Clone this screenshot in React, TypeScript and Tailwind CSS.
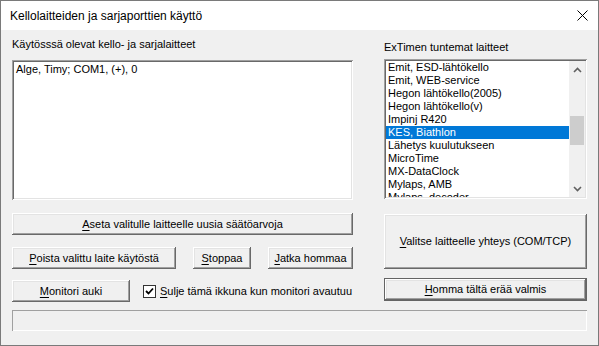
import React from "react";

const raised =
  "shadow-[inset_-1px_-1px_#696969,inset_1px_1px_#ffffff,inset_-2px_-2px_#a0a0a0,inset_2px_2px_#e3e3e3]";
const sunken =
  "shadow-[inset_1px_1px_#a0a0a0,inset_-1px_-1px_#ffffff,inset_2px_2px_#696969,inset_-2px_-2px_#e3e3e3]";

const devices = [
  "Emit, ESD-lähtökello",
  "Emit, WEB-service",
  "Hegon lähtökello(2005)",
  "Hegon lähtökello(v)",
  "Impinj R420",
  "KES, Biathlon",
  "Lähetys kuulutukseen",
  "MicroTime",
  "MX-DataClock",
  "Mylaps, AMB",
  "Mylaps, decoder",
];

function Btn({
  u,
  rest,
  className = "",
}: {
  u: string;
  rest: string;
  className?: string;
}) {
  return (
    <div
      className={`flex items-center justify-center bg-[#f0f0f0] text-[11px] leading-[13px] text-black ${raised} ${className}`}
    >
      <span>
        <span className="underline underline-offset-[2px]">{u}</span>
        {rest}
      </span>
    </div>
  );
}

function Chevron({ up }: { up: boolean }) {
  return (
    <svg width="9" height="6" viewBox="0 0 9 6">
      <polyline
        points={up ? "1,5 4.5,1.5 8,5" : "1,1 4.5,4.5 8,1"}
        fill="none"
        stroke="#606060"
        strokeWidth="1.6"
      />
    </svg>
  );
}

export default function App() {
  return (
    <div
      className="w-[599px] h-[346px] border border-[#7a7a7a] bg-[#f0f0f0] flex flex-col overflow-hidden"
      style={{ fontFamily: '"Liberation Sans", Arial, sans-serif' }}
    >
      {/* title bar */}
      <div className="h-[29px] bg-white flex items-center justify-between pl-[9px] pr-[10px] shrink-0">
        <span className="text-[12px] text-black">Kellolaitteiden ja sarjaporttien käyttö</span>
        <svg width="11" height="11" viewBox="0 0 11 11">
          <path d="M0.5 0.5 L10.5 10.5 M10.5 0.5 L0.5 10.5" stroke="#000" strokeWidth="1" />
        </svg>
      </div>

      <div className="flex flex-col px-[11px]">
        <div className="flex">
          {/* left column */}
          <div className="w-[341px] flex flex-col">
            <div className="mt-[8px] h-[13px] text-[11px] leading-[13px]">
              Käytösssä olevat kello- ja sarjalaitteet
            </div>
            <div className={`mt-[9px] h-[140px] bg-white p-[2px] ${sunken}`}>
              <div className="pl-[2px] pt-[1px] text-[11px] leading-[13px]">Alge, Timy; COM1, (+), 0</div>
            </div>
            <Btn className="mt-[13px] h-[22px]" u="A" rest="seta valitulle laitteelle uusia säätöarvoja" />
            <div className="mt-[12px] flex gap-[17px]">
              <Btn className="w-[164px] h-[22px]" u="P" rest="oista valittu laite käytöstä" />
              <Btn className="w-[58px] h-[22px]" u="S" rest="toppaa" />
              <Btn className="w-[85px] h-[22px]" u="J" rest="atka hommaa" />
            </div>
            <div className="mt-[11px] flex items-center">
              <Btn className="w-[118px] h-[22px]" u="M" rest="onitori auki" />
              <div className="ml-[13px] w-[13px] h-[13px] bg-white border border-[#333] flex items-center justify-center">
                <svg width="9" height="9" viewBox="0 0 9 9">
                  <polyline points="1,4 3.5,6.5 8,1.5" fill="none" stroke="#000" strokeWidth="1.8" />
                </svg>
              </div>
              <span className="ml-[4px] text-[11px] leading-[13px]">
                <span className="underline underline-offset-[2px]">S</span>ulje tämä ikkuna kun monitori avautuu
              </span>
            </div>
          </div>

          {/* right column */}
          <div className="ml-[31px] w-[203px] flex flex-col">
            <div className="mt-[11px] h-[13px] text-[11px] leading-[13px]">ExTimen tuntemat laitteet</div>
            <div className={`mt-[5px] h-[140px] bg-white p-[2px] flex ${sunken}`}>
              <div className="flex-1 overflow-hidden">
                {devices.map((d) => (
                  <div
                    key={d}
                    className={`h-[13px] pl-[2px] text-[11px] leading-[13px] whitespace-nowrap ${
                      d === "KES, Biathlon" ? "bg-[#0078d7] text-white" : "text-black"
                    }`}
                  >
                    {d}
                  </div>
                ))}
              </div>
              <div className="w-[16px] bg-[#f0f0f0] flex flex-col">
                <div className="h-[17px] flex items-center justify-center">
                  <Chevron up />
                </div>
                <div className="flex-1 flex flex-col">
                  <div className="h-[38px]" />
                  <div className="h-[29px] bg-[#cdcdcd] mx-[1px]" />
                </div>
                <div className="h-[17px] flex items-center justify-center">
                  <Chevron up={false} />
                </div>
              </div>
            </div>
            <Btn className="mt-[15px] h-[55px]" u="V" rest="alitse laitteelle yhteys (COM/TCP)" />
            <div className="mt-[9px] h-[23px] border border-[#646464] flex">
              <Btn className="flex-1" u="H" rest="omma tältä erää valmis" />
            </div>
          </div>
        </div>

        {/* status bar */}
        <div className="mt-[8px] h-[21px] shadow-[inset_1px_1px_#a0a0a0,inset_-1px_-1px_#ffffff]" />
      </div>
    </div>
  );
}
